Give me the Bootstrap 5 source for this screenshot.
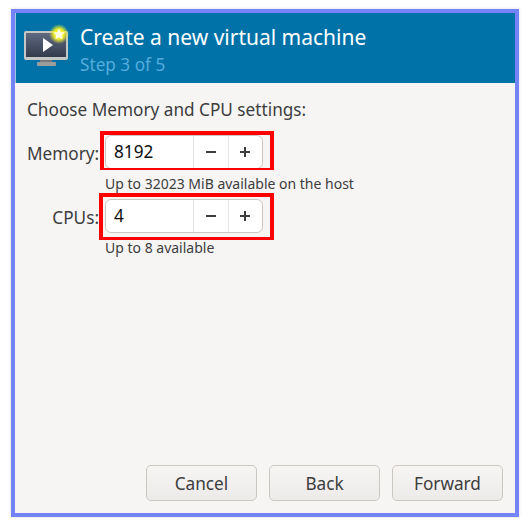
<!DOCTYPE html>
<html lang="en">
<head>
<meta charset="utf-8">
<title>Create a new virtual machine</title>
<link href="https://cdn.jsdelivr.net/npm/bootstrap@5.3.0/dist/css/bootstrap.min.css" rel="stylesheet">
<style>
html, body { height: 100%; }
body { background: #fff; font-family: "Noto Sans", "Liberation Sans", sans-serif; color: #3d3d3d; padding: 9px 11px 13px 11px; }
.vm-window { height: 508px; width: 508px; border: 4px solid #7583fb; background: #f6f5f4; box-shadow: 0 0 3px rgba(0,0,0,.15); }
.vm-head { height: 70px; background: #0072a8; color: #fff; padding-left: 9px; box-shadow: inset 1px 0 0 #9fc6da; }
.vm-text { padding-top: 6px; }
.vm-title { font-size: 21px; line-height: 26px; }
.vm-step { font-size: 17.2px; line-height: 26px; margin-top: 2px; color: #55acdf; }
.vm-body { padding: 15px 12px 0 12px; font-size: 17.2px; }
.vm-lead { line-height: 24px; margin-bottom: 13px; }
.vm-grid { display: grid; grid-template-columns: 72px 1fr; column-gap: 6px; }
.vm-lbl { text-align: right; align-self: center; line-height: 24px; padding-top: 4px; }
.vm-hint { grid-column: 2; font-size: 14px; line-height: 18px; margin-top: 6px; margin-bottom: 6px; }
.vm-spin { width: 158px; height: 34px; background: #fff; border: 1px solid #cdc7c2; border-radius: 6px; color: #111; }
.vm-val { width: 87px; padding-left: 8px; line-height: 32px; }
.vm-step-btn { flex: 1; border-left: 1px solid #e8e6e3; }
.vm-mark { position: absolute; border: 4px solid #f00; pointer-events: none; }
.vm-mark-a { left: -6px; top: -5px; right: -12px; bottom: -2px; border-bottom-width: 2px; }
.vm-mark-b { left: -7px; top: -7px; right: -12px; bottom: -8px; border-bottom-width: 3px; }
.vm-foot { padding: 0 12px 12px 0; gap: 12px; }
.vm-btn { width: 111px; height: 36px; padding: 1px 0 0; font-size: 17.2px; color: #3d3d3d; border: 1px solid #cdc7c2; border-radius: 5px; background: linear-gradient(#f6f5f4, #edebe9); }
</style>
</head>
<body>
<div class="vm-window d-flex flex-column">
  <div class="vm-head d-flex align-items-center">
    <svg width="56" height="56" viewBox="0 0 56 56" class="flex-shrink-0" aria-hidden="true">
      <defs>
        <radialGradient id="glow"><stop offset="0.5" stop-color="#eef02c"/><stop offset="1" stop-color="#e6e62a" stop-opacity="0"/></radialGradient>
        <linearGradient id="scr" x1="0" y1="0" x2="0" y2="1"><stop offset="0" stop-color="#5f6980"/><stop offset="1" stop-color="#333c4e"/></linearGradient>
      </defs>
      <rect x="0" y="11" width="44" height="29" rx="2" fill="#c6c6c4"/>
      <rect x="2" y="13" width="40" height="24" fill="url(#scr)"/>
      <rect x="16" y="40" width="12" height="2" fill="#77777a"/>
      <rect x="13" y="42" width="19" height="4" rx="1" fill="#9c9c9a"/>
      <path d="M19 18 L29 25 L19 32 Z" fill="#fff"/>
      <circle cx="35" cy="14" r="10" fill="url(#glow)"/>
      <path d="M35 8.5 L36.8 12 L40.7 12.6 L37.9 15.3 L38.6 19.2 L35 17.4 L31.4 19.2 L32.1 15.3 L29.3 12.6 L33.2 12 Z" fill="#fffde0"/>
    </svg>
    <div class="vm-text">
      <div class="vm-title">Create a new virtual machine</div>
      <div class="vm-step">Step 3 of 5</div>
    </div>
  </div>
  <div class="vm-body flex-grow-1">
    <div class="vm-lead">Choose Memory and CPU settings:</div>
    <div class="vm-grid">
      <div class="vm-lbl">Memory:</div>
      <div class="vm-spin d-flex position-relative">
        <div class="vm-val">8192</div>
        <div class="vm-step-btn d-flex align-items-center justify-content-center"><svg width="10" height="10" viewBox="0 0 10 10" aria-hidden="true"><rect y="4" width="10" height="2" fill="#3d3d3d"/></svg></div>
        <div class="vm-step-btn d-flex align-items-center justify-content-center"><svg width="10" height="10" viewBox="0 0 10 10" aria-hidden="true"><path d="M0 4h4V0h2v4h4v2H6v4H4V6H0z" fill="#3d3d3d"/></svg></div>
        <div class="vm-mark vm-mark-a"></div>
      </div>
      <div class="vm-hint">Up to 32023 MiB available on the host</div>
      <div class="vm-lbl">CPUs:</div>
      <div class="vm-spin d-flex position-relative">
        <div class="vm-val">4</div>
        <div class="vm-step-btn d-flex align-items-center justify-content-center"><svg width="10" height="10" viewBox="0 0 10 10" aria-hidden="true"><rect y="4" width="10" height="2" fill="#3d3d3d"/></svg></div>
        <div class="vm-step-btn d-flex align-items-center justify-content-center"><svg width="10" height="10" viewBox="0 0 10 10" aria-hidden="true"><path d="M0 4h4V0h2v4h4v2H6v4H4V6H0z" fill="#3d3d3d"/></svg></div>
        <div class="vm-mark vm-mark-b"></div>
      </div>
      <div class="vm-hint">Up to 8 available</div>
    </div>
  </div>
  <div class="vm-foot d-flex justify-content-end">
    <button type="button" class="btn vm-btn">Cancel</button>
    <button type="button" class="btn vm-btn">Back</button>
    <button type="button" class="btn vm-btn">Forward</button>
  </div>
</div>
<script src="https://cdn.jsdelivr.net/npm/bootstrap@5.3.0/dist/js/bootstrap.bundle.min.js"></script>
</body>
</html>
